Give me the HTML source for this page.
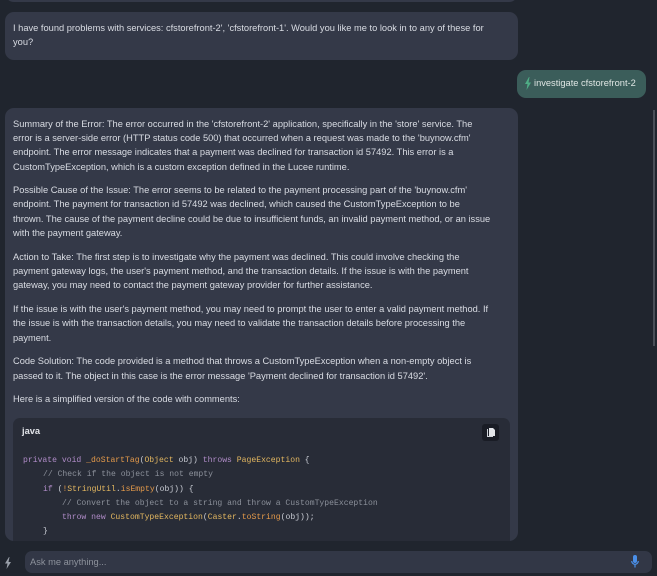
<!DOCTYPE html>
<html><head><meta charset="utf-8"><style>
*{margin:0;padding:0;box-sizing:border-box}
body{width:657px;height:576px;background:#20252e;overflow:hidden;position:relative;font-family:"Liberation Sans",sans-serif;color:#d9dce3;font-size:9.3px}
.b{position:absolute;left:5px;width:513px;background:#343948;border-radius:9px}
.l{position:absolute;left:13px;white-space:nowrap;line-height:12px}
.c{position:absolute;left:23px;white-space:nowrap;font-family:"Liberation Mono",monospace;font-size:8.1px;color:#c9ccd4;line-height:12px}
.k{color:#b08cc8}.t{color:#e3b760}.f{color:#e59a4a}.m{color:#8b909a}
</style></head><body>
<div class="b" style="top:-20px;height:22px"></div>
<div class="b" style="top:12px;height:48px"></div>
<div class="l" style="top:22px">I have found problems with services: cfstorefront-2', 'cfstorefront-1'. Would you like me to look in to any of these for</div>
<div class="l" style="top:36px">you?</div>
<div style="position:absolute;left:517px;top:70px;width:129px;height:28px;background:#3b5d5a;border-radius:9px"></div>
<svg style="position:absolute;left:525px;top:77px" width="6" height="13" viewBox="0 0 6 13"><path d="M4 0L0 7h2.5L1.5 13 6 5.5H3.5L4.5 0z" fill="#4fae86"/></svg>
<div class="l" style="left:534px;top:77px;color:#dfe6e4">investigate cfstorefront-2</div>
<div class="b" style="top:108px;height:433px"></div>
<div class="l" style="top:118px">Summary of the Error: The error occurred in the 'cfstorefront-2' application, specifically in the 'store' service. The</div>
<div class="l" style="top:132px">error is a server-side error (HTTP status code 500) that occurred when a request was made to the 'buynow.cfm'</div>
<div class="l" style="top:146px">endpoint. The error message indicates that a payment was declined for transaction id 57492. This error is a</div>
<div class="l" style="top:161px">CustomTypeException, which is a custom exception defined in the Lucee runtime.</div>
<div class="l" style="top:184px">Possible Cause of the Issue: The error seems to be related to the payment processing part of the 'buynow.cfm'</div>
<div class="l" style="top:198px">endpoint. The payment for transaction id 57492 was declined, which caused the CustomTypeException to be</div>
<div class="l" style="top:213px">thrown. The cause of the payment decline could be due to insufficient funds, an invalid payment method, or an issue</div>
<div class="l" style="top:227px">with the payment gateway.</div>
<div class="l" style="top:251px">Action to Take: The first step is to investigate why the payment was declined. This could involve checking the</div>
<div class="l" style="top:265px">payment gateway logs, the user's payment method, and the transaction details. If the issue is with the payment</div>
<div class="l" style="top:279px">gateway, you may need to contact the payment gateway provider for further assistance.</div>
<div class="l" style="top:303px">If the issue is with the user's payment method, you may need to prompt the user to enter a valid payment method. If</div>
<div class="l" style="top:317px">the issue is with the transaction details, you may need to validate the transaction details before processing the</div>
<div class="l" style="top:332px">payment.</div>
<div class="l" style="top:355px">Code Solution: The code provided is a method that throws a CustomTypeException when a non-empty object is</div>
<div class="l" style="top:370px">passed to it. The object in this case is the error message 'Payment declined for transaction id 57492'.</div>
<div class="l" style="top:393px">Here is a simplified version of the code with comments:</div>
<div style="position:absolute;left:13px;top:418px;width:497px;height:123px;background:#282c37;border-radius:7px 7px 0 0"></div>
<div class="l" style="left:22px;top:425px;font-weight:bold;color:#e3e5ea">java</div>
<div style="position:absolute;left:482px;top:424px;width:17px;height:17px;background:#191c25;border-radius:3px"></div>
<svg style="position:absolute;left:487px;top:428px" width="8" height="9" viewBox="0 0 8 9"><path d="M0 1h1v7h5v1H0z" fill="#cfd2d8"/><path d="M2 0h4l2 2v6H2z" fill="#e4e6ea"/></svg>
<div class="c" style="top:455px"><span class="k">private void</span> <span class="f">_doStartTag</span>(<span class="t">Object</span> obj) <span class="k">throws</span> <span class="t">PageException</span> {</div>
<div class="c" style="top:469px;left:43px"><span class="m">// Check if the object is not empty</span></div>
<div class="c" style="top:484px;left:43px"><span class="k">if</span> (<span class="f">!</span><span class="t">StringUtil</span>.<span class="f">isEmpty</span>(obj)) {</div>
<div class="c" style="top:498px;left:62px"><span class="m">// Convert the object to a string and throw a CustomTypeException</span></div>
<div class="c" style="top:512px;left:62px"><span class="k">throw new</span> <span class="t">CustomTypeException</span>(<span class="t">Caster</span>.<span class="f">toString</span>(obj));</div>
<div class="c" style="top:526px;left:43px">}</div>
<div style="position:absolute;left:0;top:541px;width:657px;height:35px;background:#20252e"></div>
<div style="position:absolute;left:653px;top:110px;width:2px;height:236px;background:#4a4f58"></div>
<svg style="position:absolute;left:5px;top:557px" width="6" height="12" viewBox="0 0 6 12"><path d="M4 0L0 6.5h2.5L1.5 12 6 5H3.5L4.5 0z" fill="#9aa0aa"/></svg>
<div style="position:absolute;left:25px;top:551px;width:627px;height:22px;background:#323746;border-radius:7px"></div>
<div class="l" style="left:30px;top:556px;color:#8d929c">Ask me anything...</div>
<svg style="position:absolute;left:631px;top:555px" width="8" height="14" viewBox="0 0 8 14"><rect x="2" y="0" width="4" height="8" rx="2" fill="#4a8fe8"/><path d="M0.7 6a3.3 3.3 0 0 0 6.6 0" stroke="#4a8fe8" stroke-width="1.2" fill="none"/><rect x="3.4" y="9.5" width="1.2" height="3" fill="#4a8fe8"/></svg>
</body></html>
